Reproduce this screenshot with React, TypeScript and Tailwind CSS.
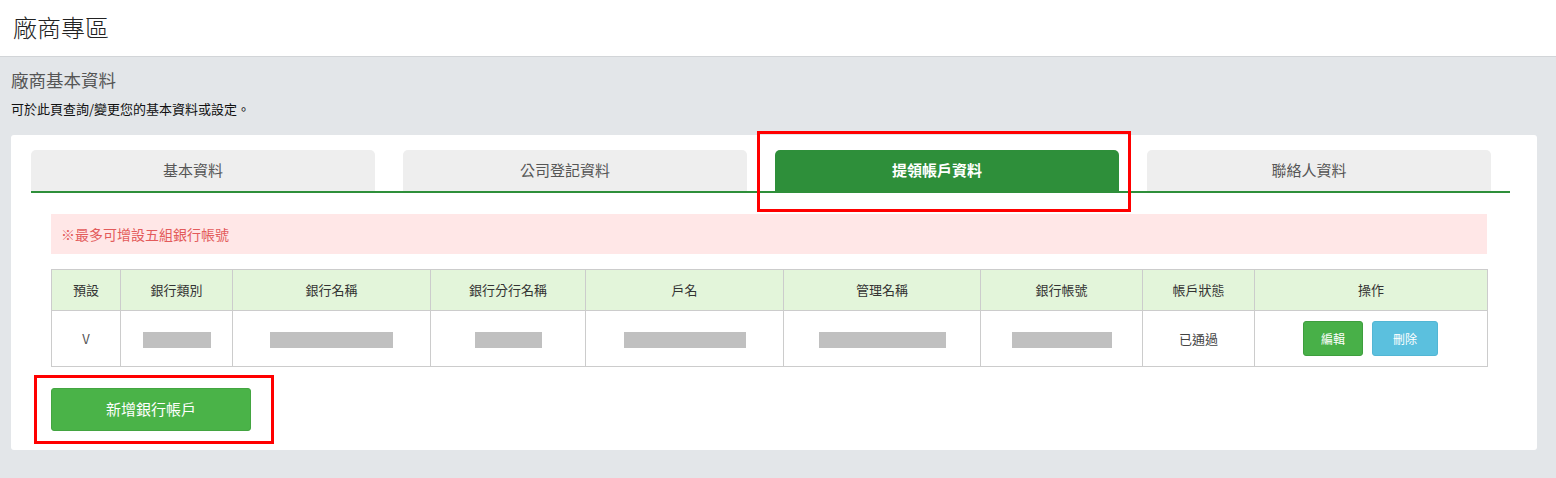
const tabs = ["基本資料", "公司登記資料", "提領帳戶資料", "聯絡人資料"];

const columns = [
  { title: "預設", width: 69 },
  { title: "銀行類別", width: 112 },
  { title: "銀行名稱", width: 198 },
  { title: "銀行分行名稱", width: 155 },
  { title: "戶名", width: 198 },
  { title: "管理名稱", width: 197 },
  { title: "銀行帳號", width: 162 },
  { title: "帳戶狀態", width: 112 },
  { title: "操作", width: 233 },
];

function Blur({ w }: { w: string }) {
  return <span className={`inline-block h-[16px] bg-[#c0c0c0] align-middle ${w}`} />;
}

export default function App() {
  return (
    <div
      className="relative min-h-[478px] bg-[#e3e6e9] text-[#333]"
      style={{ fontFamily: '"Noto Sans CJK TC", "Noto Sans", sans-serif' }}
    >
      <header className="h-[57px] bg-white border-b border-[#d2d5d8] flex items-center px-[13px]">
        <h1 className="text-[24px] leading-none font-light text-[#222] -mt-[3px]">廠商專區</h1>
      </header>

      <section className="pl-[11px] pr-[19px] pt-[13px] pb-[28px]">
        <h2 className="text-[17.5px] leading-[20px] text-[#555]">廠商基本資料</h2>
        <p className="text-[13px] leading-[18px] mt-[10px] text-[#111]">可於此頁查詢/變更您的基本資料或設定。</p>

        <div className="mt-[17px] bg-white rounded-[3px] pl-[20px] pr-[27px] pt-[15px] pb-[19px]">
          <ul className="flex gap-[28px] border-b-2 border-[#2e8f3a]">
            {tabs.map((t, i) => (
              <li
                key={t}
                className={
                  i === 2
                    ? "w-[344px] h-[41px] pr-[20px] rounded-t-[5px] bg-[#2e8f3a] text-white font-bold flex items-center justify-center text-[15px]"
                    : "w-[344px] h-[41px] pr-[20px] rounded-t-[5px] bg-[#eeeeee] text-[#555] flex items-center justify-center text-[15px]"
                }
              >
                {t}
              </li>
            ))}
          </ul>

          <div className="pl-[20px] pr-[23px]">
            <div className="mt-[21px] h-[40px] bg-[#ffe7e7] text-[#e35b5b] text-[14px] flex items-center px-[10px]">
              ※最多可增設五組銀行帳號
            </div>

            <table className="mt-[15px] w-full table-fixed border-collapse text-[13px]">
              <colgroup>
                {columns.map((c) => (
                  <col key={c.title} style={{ width: c.width }} />
                ))}
              </colgroup>
              <thead>
                <tr className="h-[41px] bg-[#e3f5da]">
                  {columns.map((c) => (
                    <th key={c.title} className="border border-[#cccccc] font-normal text-[#333]">
                      {c.title}
                    </th>
                  ))}
                </tr>
              </thead>
              <tbody>
                <tr className="h-[56px] text-center">
                  <td className="border border-[#cccccc] text-[#555]">V</td>
                  <td className="border border-[#cccccc]"><Blur w="w-[68px]" /></td>
                  <td className="border border-[#cccccc]"><Blur w="w-[123px]" /></td>
                  <td className="border border-[#cccccc]"><Blur w="w-[67px]" /></td>
                  <td className="border border-[#cccccc]"><Blur w="w-[122px]" /></td>
                  <td className="border border-[#cccccc]"><Blur w="w-[127px]" /></td>
                  <td className="border border-[#cccccc]"><Blur w="w-[100px]" /></td>
                  <td className="border border-[#cccccc] text-[#444]">已通過</td>
                  <td className="border border-[#cccccc]">
                    <div className="flex justify-center gap-[9px] pr-[1px]">
                      <button className="w-[60px] h-[35px] rounded-[3px] bg-[#48b048] border border-[#3e9e3e] text-white text-[12px]">
                        編輯
                      </button>
                      <button className="w-[66px] h-[35px] rounded-[3px] bg-[#5bc0de] border border-[#52b6d4] text-white text-[12px]">
                        刪除
                      </button>
                    </div>
                  </td>
                </tr>
              </tbody>
            </table>

            <button className="mt-[21px] w-[200px] h-[43px] rounded-[3px] bg-[#4ab348] border border-[#43a541] text-white text-[15px]">
              新增銀行帳戶
            </button>
          </div>
        </div>
      </section>

      <div className="absolute left-[757px] top-[131px] w-[374px] h-[81px] border-[3px] border-[#ff0000]" />
      <div className="absolute left-[34px] top-[375px] w-[240px] h-[69px] border-[3px] border-[#ff0000]" />
    </div>
  );
}
